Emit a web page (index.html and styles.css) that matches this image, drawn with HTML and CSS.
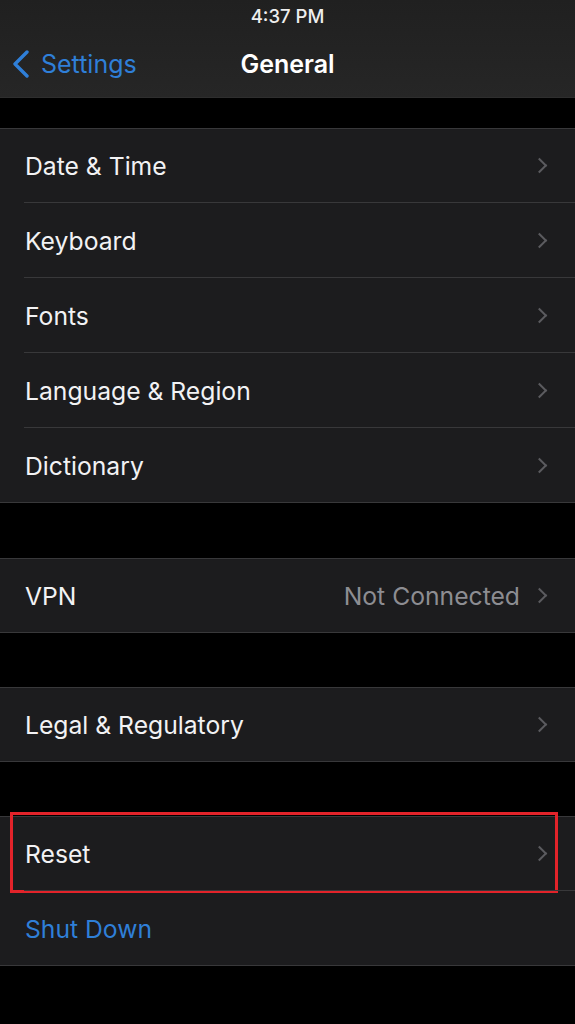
FILE: index.html
```html
<!DOCTYPE html>
<html lang="en">

<head>
    <meta charset="utf-8">
    <meta name="viewport" content="width=device-width, initial-scale=1.0">
    <title>General</title>
    <link rel="stylesheet" href="styles.css">
</head>

<body>
    <header class="topbar">
        <div class="status">4:37 PM</div>
        <nav class="navbar">
            <a class="back">
                <svg width="18" height="28" viewBox="0 0 18 28"><path d="M15 2 L3 14 L15 26" fill="none" stroke="#2f7fd8" stroke-width="3.4" stroke-linecap="round" stroke-linejoin="round"/></svg>
                <span>Settings</span>
            </a>
            <h1>General</h1>
        </nav>
    </header>

    <main>
        <section class="group first">
            <div class="row"><span class="label">Date &amp; Time</span><span class="chev"></span></div>
            <div class="row"><span class="label">Keyboard</span><span class="chev"></span></div>
            <div class="row"><span class="label">Fonts</span><span class="chev"></span></div>
            <div class="row"><span class="label">Language &amp; Region</span><span class="chev"></span></div>
            <div class="row"><span class="label">Dictionary</span><span class="chev"></span></div>
        </section>

        <section class="group">
            <div class="row"><span class="label">VPN</span><span class="value">Not Connected</span><span class="chev"></span></div>
        </section>

        <section class="group">
            <div class="row"><span class="label">Legal &amp; Regulatory</span><span class="chev"></span></div>
        </section>

        <section class="group">
            <div class="row marked"><span class="label">Reset</span><span class="chev"></span></div>
            <div class="row"><span class="label blue">Shut Down</span></div>
        </section>
    </main>
</body>

</html>
```

FILE: styles.css
```css
body {
    margin: 0;
    background-color: #000;
    font-family: Inter, "Liberation Sans", sans-serif;
    color: #f2f2f4;
}

.topbar {
    height: 98px;
    background: linear-gradient(#202020, #262626);
    border-bottom: 1px solid #2e2e2e;
    box-sizing: border-box;
}

.status {
    text-align: center;
    font-size: 18.5px;
    font-weight: 500;
    padding-top: 5px;
    height: 29px;
    color: #eee;
}

.navbar {
    position: relative;
    height: 62px;
    display: flex;
    align-items: center;
    justify-content: center;
}

.navbar h1 {
    margin: 0;
    font-size: 25px;
    font-weight: 600;
    color: #fff;
    padding-bottom: 2px;
}

.back {
    position: absolute;
    left: 12px;
    top: 15px;
    display: flex;
    align-items: center;
    gap: 11px;
    color: #2f7fd8;
    font-size: 25px;
}

main {
    padding-top: 30px;
}

.group {
    background-color: #1c1c1e;
    box-shadow: inset 0 1px #38383a, inset 0 -1px #38383a;
    margin-bottom: 54px;
}

.first {
    margin-bottom: 55px;
}

.row {
    position: relative;
    height: 75px;
    display: flex;
    align-items: center;
    padding: 0 26px 0 25px;
    font-size: 24.7px;
}

.row + .row::before {
    content: "";
    position: absolute;
    top: -1px;
    left: 24px;
    right: 0;
    border-top: 1px solid #38383a;
}

.label {
    flex: 1;
}

.value {
    color: #8d8d92;
    margin-right: 14px;
}

.blue {
    color: #2f7fd8;
}

.chev {
    width: 9px;
    height: 9px;
    border-top: 2.5px solid #5b5b5f;
    border-right: 2.5px solid #5b5b5f;
    transform: rotate(45deg);
    margin-right: 4px;
}

.marked::after {
    content: "";
    position: absolute;
    left: 10px;
    right: 17px;
    top: -4px;
    bottom: -2px;
    border: 3px solid #e2232a;
}
```
